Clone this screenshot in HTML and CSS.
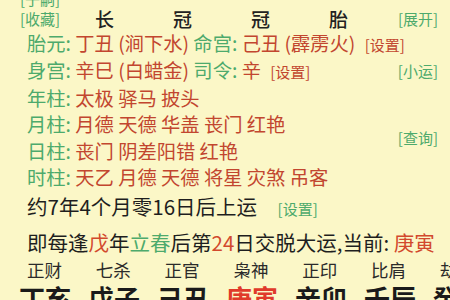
FILE: index.html
```html
<!DOCTYPE html>
<html lang="zh">
<head>
<meta charset="utf-8">
<link rel="stylesheet" href="styles.css">
</head>
<body>
<div class="page">
  <div class="cut"><span class="g">[子嗣]</span></div>
  <div class="head">
    <span class="g sm">[收藏]</span>
    <span class="stage">长</span>
    <span class="stage">冠</span>
    <span class="stage">冠</span>
    <span class="stage">胎</span>
    <span class="g sm">[展开]</span>
  </div>
  <div class="row first"><span class="g">胎元:</span> <span class="r">丁丑 (涧下水)</span> <span class="g">命宫:</span> <span class="r">己丑 (霹雳火)</span> <span class="r sm set">[设置]</span></div>
  <div class="row split"><span><span class="g">身宫:</span> <span class="r">辛巳 (白蜡金)</span> <span class="g">司令:</span> <span class="r">辛</span> <span class="r sm set">[设置]</span></span><span class="g sm side">[小运]</span></div>
  <div class="pillars">
    <div class="plist">
      <div class="row"><span class="g">年柱:</span> <span class="r">太极 驿马 披头</span></div>
      <div class="row"><span class="g">月柱:</span> <span class="r">月德 天德 华盖 丧门 红艳</span></div>
      <div class="row"><span class="g">日柱:</span> <span class="r">丧门 阴差阳错 红艳</span></div>
      <div class="row"><span class="g">时柱:</span> <span class="r">天乙 月德 天德 将星 灾煞 吊客</span></div>
    </div>
    <span class="g sm side">[查询]</span>
  </div>
  <div class="big b1">约7年4个月零16日后上运 <span class="g sm set2">[设置]</span></div>
  <div class="big b2">即每逢<span class="r2">戊</span>年<span class="g">立春</span>后第<span class="r2">24</span>日交脱大运,当前: <span class="r2">庚寅</span></div>
  <div class="gods">
    <span>正财</span><span>七杀</span><span>正官</span><span>枭神</span><span>正印</span><span>比肩</span><span>劫</span>
  </div>
  <div class="luck">
    <span>丁亥</span><span>戊子</span><span>己丑</span><span class="rr">庚寅</span><span>辛卯</span><span>壬辰</span><span>癸巳</span>
  </div>
</div>
</body>
</html>
```
FILE: styles.css
```css
html, body {
  margin: 0;
  padding: 0;
  background: #fbf7c7;
  overflow: hidden;
}
body {
  width: 450px;
  height: 300px;
  font-family: "Noto Sans CJK SC", "Noto Sans", sans-serif;
  color: #222;
}
.page {
  display: flex;
  flex-direction: column;
}
.g { color: #4daa6c; }
.r { color: #c2462f; }
.r2 { color: #d2492d; }
.sm { font-size: 15px; }
.set { margin-left: 5px; }
.set2 { margin-left: 16px; }
.cut {
  margin-top: -10px;
  height: 18px;
  line-height: 18px;
  padding-left: 20px;
  font-size: 15px;
}
.head {
  display: grid;
  grid-template-columns: 75px 78px 78px 78px 69px auto;
  padding-left: 20px;
  height: 22px;
  line-height: 22px;
  align-items: center;
}
.stage {
  font-size: 19px;
  font-weight: 500;
  color: #222;
}
.row {
  padding-left: 27px;
  font-size: 19.3px;
  line-height: 26.3px;
  white-space: nowrap;
}
.row.first {
  line-height: 27px;
}
.split {
  display: flex;
  justify-content: space-between;
  padding-right: 12px;
  align-items: center;
  height: 27px;
}
.side {
  white-space: nowrap;
}
.pillars {
  display: flex;
  justify-content: space-between;
  align-items: center;
  padding-right: 12px;
}
.big {
  padding-left: 27px;
  font-size: 20.5px;
  white-space: nowrap;
  color: #1e1e1e;
}
.b1 { line-height: 32px; }
.b2 { line-height: 34px; }
.gods {
  display: grid;
  grid-template-columns: repeat(7, 68.8px);
  padding-left: 27px;
  font-size: 17.5px;
  line-height: 22px;
  white-space: nowrap;
  color: #2a2a2a;
}
.luck {
  display: grid;
  grid-template-columns: repeat(7, 69px);
  padding-left: 19px;
  margin-top: 2px;
  font-size: 26px;
  font-weight: bold;
  line-height: 30px;
  white-space: nowrap;
  color: #1a1a1a;
}
.luck .rr { color: #e03a2a; }
```
